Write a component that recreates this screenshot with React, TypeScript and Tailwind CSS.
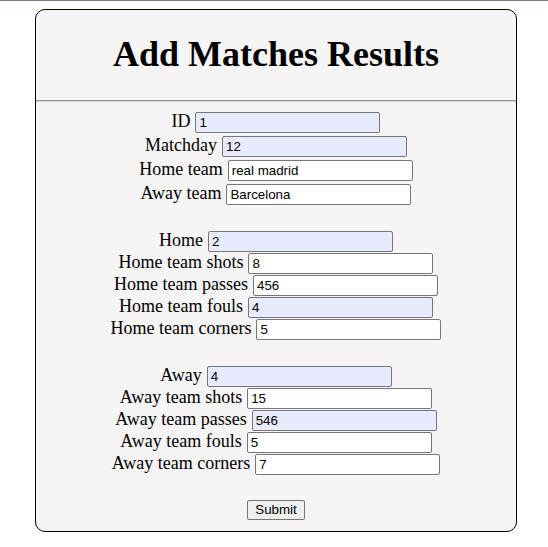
import React from 'react';

type Field = { label: string; value: string; filled?: boolean };

const matchFields: Field[] = [
  { label: 'ID', value: '1', filled: true },
  { label: 'Matchday', value: '12', filled: true },
  { label: 'Home team', value: 'real madrid' },
  { label: 'Away team', value: 'Barcelona' },
];

const homeFields: Field[] = [
  { label: 'Home', value: '2', filled: true },
  { label: 'Home team shots', value: '8' },
  { label: 'Home team passes', value: '456' },
  { label: 'Home team fouls', value: '4', filled: true },
  { label: 'Home team corners', value: '5' },
];

const awayFields: Field[] = [
  { label: 'Away', value: '4', filled: true },
  { label: 'Away team shots', value: '15' },
  { label: 'Away team passes', value: '546', filled: true },
  { label: 'Away team fouls', value: '5' },
  { label: 'Away team corners', value: '7' },
];

const Row: React.FC<{ field: Field }> = ({ field }) => (
  <div className="flex items-baseline justify-center gap-[5px]">
    <label className="text-[18px] leading-[21px]">{field.label}</label>
    <input
      type="text"
      defaultValue={field.value}
      className={
        'h-[21px] w-[185px] rounded-[2px] border border-[#767676] px-[3px] text-[13.33px] text-black outline-none ' +
        (field.filled ? 'bg-[#e8ebfd]' : 'bg-white')
      }
      style={{ fontFamily: '"Liberation Sans", Arial, sans-serif' }}
    />
  </div>
);

export default function App() {
  return (
    <div className="min-h-[547px] bg-white font-['Liberation_Serif',serif] text-black">
      <div className="h-px bg-[#7a7a8c]" />
      <div className="ml-[35px] mt-2 w-[482px] overflow-hidden rounded-[10px] border border-black bg-[#f6f4f5]">
        <header className="pb-[25px] pt-[24px] text-center">
          <h1 className="text-[36px] font-bold leading-[41px]">Add Matches Results</h1>
        </header>
        <div className="border-t border-b border-t-[#8f8f8f] border-b-[#d9d9d9]" />
        <form className="flex flex-col items-center pb-[11px] pt-[9px]">
          <div className="flex flex-col gap-[2px]">
            {matchFields.map((f) => (
              <Row key={f.label} field={f} />
            ))}
          </div>
          <div className="mt-[25px] flex flex-col">
            {homeFields.map((f) => (
              <Row key={f.label} field={f} />
            ))}
          </div>
          <div className="mt-[25px] flex flex-col">
            {awayFields.map((f) => (
              <Row key={f.label} field={f} />
            ))}
          </div>
          <button
            type="button"
            className="mt-[25px] h-[20px] rounded-[2px] border border-[#767676] bg-[#efefef] px-[7px] text-[13.33px] leading-none text-black"
            style={{ fontFamily: '"Liberation Sans", Arial, sans-serif' }}
          >
            Submit
          </button>
        </form>
      </div>
    </div>
  );
}
